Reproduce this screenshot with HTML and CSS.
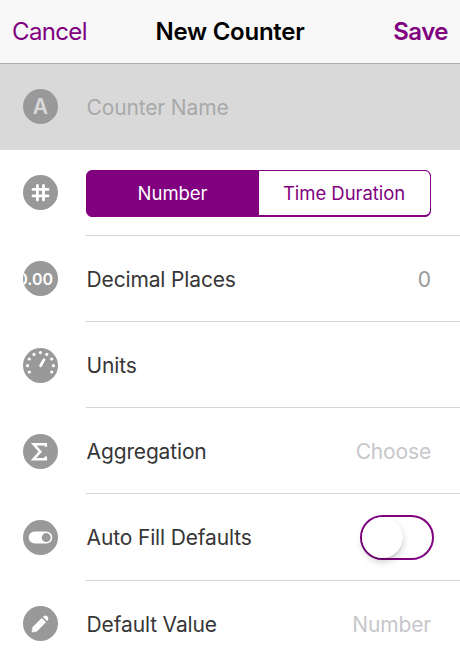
FILE: index.html
```html
<!DOCTYPE html>
<html lang="en">
<head>
  <meta charset="UTF-8">
  <title>New Counter</title>
  <meta name="viewport" content="width=device-width, initial-scale=1">
  <link rel="stylesheet" href="styles.css">
</head>
<body>

  <header class="navbar">
    <a class="nav-link nav-cancel">Cancel</a>
    <h1 class="nav-title">New Counter</h1>
    <a class="nav-link nav-save">Save</a>
  </header>

  <main class="form">

    <div class="row row-name">
      <div class="icon icon-letter">A</div>
      <div class="row-body">
        <span class="placeholder name-placeholder">Counter Name</span>
      </div>
    </div>

    <div class="row">
      <div class="icon">
        <svg width="35" height="35" viewBox="0 0 35 35">
          <path d="M14.4 10.5v14.5M20.5 10.5v14.5M10 14.4h15M10 20.9h15" stroke="#fff" stroke-width="2.8" stroke-linecap="round" fill="none"/>
        </svg>
      </div>
      <div class="row-body">
        <div class="segmented">
          <button class="segment segment-active">Number</button>
          <button class="segment">Time Duration</button>
        </div>
      </div>
    </div>

    <div class="row">
      <div class="icon icon-decimal"><span>0.00</span></div>
      <div class="row-body">
        <span class="label">Decimal Places</span>
        <span class="value">0</span>
      </div>
    </div>

    <div class="row">
      <div class="icon">
        <svg width="35" height="35" viewBox="0 0 35 35">
          <g fill="#fff">
            <circle cx="6.3" cy="24" r="1.6"/>
            <circle cx="4.5" cy="17.7" r="1.6"/>
            <circle cx="6.3" cy="11" r="1.6"/>
            <circle cx="11" cy="6.4" r="1.6"/>
            <circle cx="17.4" cy="4.6" r="1.6"/>
            <circle cx="23.8" cy="6.4" r="1.6"/>
            <circle cx="28.7" cy="11" r="1.6"/>
            <circle cx="30.4" cy="17.7" r="1.6"/>
            <circle cx="28.7" cy="24" r="1.6"/>
          </g>
          <path d="M17.6 17.7L21 11.6" stroke="#fff" stroke-width="2.8" stroke-linecap="round"/>
        </svg>
      </div>
      <div class="row-body">
        <span class="label">Units</span>
      </div>
    </div>

    <div class="row">
      <div class="icon">
        <svg width="35" height="35" viewBox="0 0 35 35">
          <path d="M22.8 12.8V10.2H10.6L17.3 17.7L10.5 25.2H22.8V22.6" stroke="#fff" stroke-width="2.5" fill="none"/>
        </svg>
      </div>
      <div class="row-body">
        <span class="label">Aggregation</span>
        <span class="placeholder">Choose</span>
      </div>
    </div>

    <div class="row">
      <div class="icon">
        <svg width="35" height="35" viewBox="0 0 35 35">
          <rect x="5.7" y="11.6" width="23.6" height="12" rx="6" fill="#fff"/>
          <circle cx="23.2" cy="17.6" r="4.5" fill="#999"/>
        </svg>
      </div>
      <div class="row-body">
        <span class="label">Auto Fill Defaults</span>
        <div class="switch"><div class="switch-knob"></div></div>
      </div>
    </div>

    <div class="row">
      <div class="icon">
        <svg width="35" height="35" viewBox="0 0 35 35">
          <path d="M9 26L9.8 21.2L18.7 12.3L22.7 16.3L13.8 25.2Z" fill="#fff" stroke="#fff" stroke-width=".6" stroke-linejoin="round"/>
          <path d="M19.9 11.1L21.1 9.9Q22.6 8.8 24.2 10.2Q26 12 25.1 13.9L23.9 15.1Z" fill="#fff"/>
        </svg>
      </div>
      <div class="row-body">
        <span class="label">Default Value</span>
        <span class="placeholder">Number</span>
      </div>
    </div>

  </main>

</body>
</html>
```

FILE: styles.css
```css
html,
body {
  margin: 0;
  padding: 0;
}

body {
  height: 661px;
  overflow: hidden;
  background: #fff;
  color: #363636;
  font-family: Inter, "Helvetica Neue", Helvetica, Arial, sans-serif;
  font-size: 21px;
}

button {
  font: inherit;
}

.navbar {
  box-sizing: border-box;
  height: 64px;
  padding: 0 12px;
  display: grid;
  grid-template-columns: 1fr auto 1fr;
  align-items: center;
  background: #f8f8f8;
  border-bottom: 1px solid #adadad;
  white-space: nowrap;
}

.nav-link {
  color: #800080;
  font-size: 24px;
  letter-spacing: -0.65px;
}

.nav-save {
  justify-self: end;
  font-weight: 600;
  letter-spacing: -0.5px;
}

.nav-title {
  margin: 0;
  color: #000;
  font-size: 24px;
  font-weight: 600;
  letter-spacing: -0.25px;
}

.row {
  display: flex;
  align-items: center;
  height: 86.2px;
  padding-left: 23px;
}

.row-name {
  height: 85.6px;
  background: #d9d9d9;
}

.icon {
  flex: none;
  width: 35px;
  height: 35px;
  border-radius: 50%;
  background: #999;
  color: #fff;
  overflow: hidden;
}

.icon svg {
  display: block;
}

.icon-letter {
  color: #d9d9d9;
  font-size: 21px;
  font-weight: 600;
  line-height: 35px;
  text-align: center;
}

.icon-decimal {
  display: flex;
  align-items: center;
  justify-content: flex-end;
  font-size: 16px;
  font-weight: 600;
}

.icon-decimal span {
  margin-right: 5px;
}

.row-body {
  box-sizing: border-box;
  flex: 1;
  height: 100%;
  margin-left: 28px;
  padding: 2px 29px 0 0;
  display: flex;
  align-items: center;
  justify-content: space-between;
  border-bottom: 1px solid #d5d5d5;
  white-space: nowrap;
}

.row-name .row-body,
.row:last-child .row-body {
  border-bottom: 0;
}

.label {
  padding-left: 0.6px;
  letter-spacing: -0.15px;
}

.value {
  color: #999;
}

.placeholder {
  color: #c7c7cb;
  letter-spacing: -0.15px;
}

.name-placeholder {
  padding-left: 0.6px;
  color: #a9a9a9;
}

.segmented {
  box-sizing: border-box;
  display: grid;
  grid-template-columns: 1fr 1fr;
  width: 345px;
  height: 47px;
  border: 1px solid #800080;
  border-radius: 6px;
  background: #800080;
  overflow: hidden;
}

.segment {
  margin: 0.4px 0.4px 0.4px 0;
  padding: 0;
  border: 0;
  border-radius: 0 5px 5px 0;
  background: #fff;
  color: #800080;
  font-size: 18.5px;
  letter-spacing: -0.05px;
}

.segment:last-child {
  border-top-left-radius: 0;
  border-bottom-left-radius: 0;
}

.segment-active {
  background: #800080;
  color: #fff;
}

.switch {
  box-sizing: border-box;
  width: 74px;
  height: 45px;
  margin-right: -3px;
  border: 2px solid #800080;
  border-radius: 23px;
}

.switch-knob {
  width: 41px;
  height: 41px;
  border-radius: 50%;
  background: #fff;
  box-shadow: 0 4px 7px rgba(0, 0, 0, 0.18), 0 1px 1px rgba(0, 0, 0, 0.12);
}
```
